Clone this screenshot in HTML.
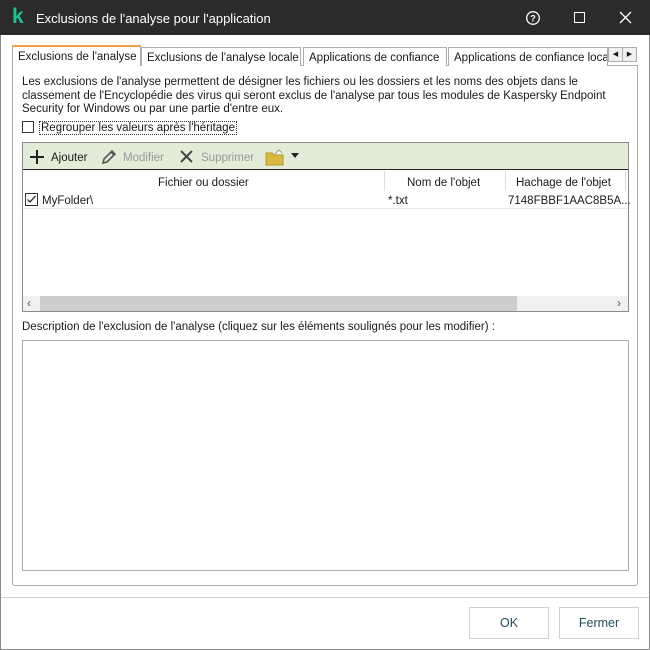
<!DOCTYPE html>
<html><head><meta charset="utf-8"><style>
*{margin:0;padding:0;box-sizing:border-box}
body{width:650px;height:650px;overflow:hidden;background:#fff;font-family:"Liberation Sans",sans-serif;font-size:11.5px;color:#1a1a1a;position:relative}
.abs{position:absolute}
#win{position:absolute;left:0;top:0;width:650px;height:650px;border:1px solid #8a8a8a;border-top:none}
#title{left:0;top:0;width:650px;height:35px;background:#2b2b2b;color:#fff;font-size:13px}
.tab{position:absolute;top:47px;height:19px;border:1px solid #adadad;border-bottom:none;background:#fff;padding:4px 5px 0 5px;white-space:nowrap;overflow:hidden;font-size:11.5px}
#panel{left:12px;top:65px;width:626px;height:521px;border:1px solid #adadad;border-radius:0 0 3px 3px}
.tb{position:absolute;top:152px;font-size:11.5px}
.hd{position:absolute;top:177px;font-size:11.5px}
</style></head><body>
<div id="win"></div>
<div class="abs" id="title">
 <div class="abs" style="left:12px;top:5px;color:#1fc195;font-weight:bold;font-size:21px">k</div>
 <div class="abs" style="left:36px;top:11px">Exclusions de l'analyse pour l'application</div>
 <svg class="abs" style="left:525px;top:10px" width="16" height="16"><circle cx="8" cy="8" r="6.3" fill="none" stroke="#fff" stroke-width="1.3"/><text x="8" y="11.5" fill="#fff" font-size="9" text-anchor="middle" font-family="Liberation Sans" font-weight="bold">?</text></svg>
 <div class="abs" style="left:574px;top:12px;width:11px;height:11px;border:1.3px solid #fff"></div>
 <svg class="abs" style="left:619px;top:11px" width="13" height="13"><path d="M1 1L12 12M12 1L1 12" stroke="#fff" stroke-width="1.3"/></svg>
</div>
<div class="abs" id="panel"></div>
<div class="tab" style="left:12px;top:45px;height:21px;width:129px;border-top:2px solid #f0a040;border-color:#f0a040 #adadad transparent;padding-top:4px">Exclusions de l'analyse</div>
<div class="tab" style="left:141px;width:160px">Exclusions de l'analyse locale</div>
<div class="tab" style="left:303px;width:144px">Applications de confiance</div>
<div class="tab" style="left:448px;width:160px">Applications de confiance locales</div>
<div class="abs" style="left:608px;top:47px;width:15px;height:15px;border:1px solid #adadad;background:#f0f0f0;font-size:7px;text-align:center;line-height:13px">&#9664;</div>
<div class="abs" style="left:622px;top:47px;width:15px;height:15px;border:1px solid #adadad;background:#f0f0f0;font-size:7px;text-align:center;line-height:13px">&#9654;</div>
<div class="abs" style="left:22px;top:76px;width:600px;line-height:13.5px">Les exclusions de l'analyse permettent de désigner les fichiers ou les dossiers et les noms des objets dans le classement de l'Encyclopédie des virus qui seront exclus de l'analyse par tous les modules de Kaspersky Endpoint Security for Windows ou par une partie d'entre eux.</div>
<div class="abs" style="left:22px;top:121px;width:12px;height:12px;border:1px solid #333;background:#fff"></div>
<div class="abs" style="left:39px;top:121px;border:1px dotted #333;padding:0 1px">Regrouper les valeurs après l'héritage</div>
<div class="abs" style="left:22px;top:142px;width:607px;height:170px;border:1px solid #8a8a8a;background:#fff"></div>
<div class="abs" style="left:23px;top:143px;width:605px;height:27px;background:#e3ecd8;border-bottom:1px solid #222"></div>
<svg class="abs" style="left:29px;top:149px" width="16" height="16"><path d="M8 1V15M1 8H15" stroke="#222" stroke-width="2"/></svg>
<div class="tb" style="left:51px">Ajouter</div>
<svg class="abs" style="left:100px;top:148px" width="18" height="18"><path d="M3 15L4 11L12 3L15 6L7 14Z M11 4L14 7" fill="none" stroke="#555" stroke-width="1.6"/></svg>
<div class="tb" style="left:123px;color:#999">Modifier</div>
<svg class="abs" style="left:180px;top:150px" width="13" height="13"><path d="M1 1L12 12M12 1L1 12" stroke="#444" stroke-width="2"/></svg>
<div class="tb" style="left:201px;color:#999">Supprimer</div>
<svg class="abs" style="left:265px;top:149px" width="20" height="17"><path d="M1 4H7L9 6H18V16H1Z" fill="#d8b840" stroke="#b8972a"/><path d="M10 5L14 1L17 4" fill="#fff" stroke="#999"/></svg>
<svg class="abs" style="left:291px;top:153px" width="9" height="6"><path d="M0 0H8L4 5Z" fill="#222"/></svg>
<div class="abs" style="left:384px;top:171px;width:1px;height:20px;background:#ddd"></div>
<div class="abs" style="left:505px;top:171px;width:1px;height:20px;background:#ddd"></div>
<div class="abs" style="left:625px;top:171px;width:1px;height:20px;background:#ddd"></div>
<div class="hd" style="left:158px">Fichier ou dossier</div>
<div class="hd" style="left:407px">Nom de l'objet</div>
<div class="hd" style="left:516px">Hachage de l'objet</div>
<div class="abs" style="left:23px;top:208px;width:605px;height:1px;background:#e8e8e8"></div>
<svg class="abs" style="left:25px;top:193px" width="13" height="13"><rect x="0.5" y="0.5" width="12" height="12" fill="#fff" stroke="#333"/><path d="M2.5 6.5L5 9L10.5 3" fill="none" stroke="#333" stroke-width="1.3"/></svg>
<div class="abs" style="left:42px;top:195px">MyFolder\</div>
<div class="abs" style="left:388px;top:195px">*.txt</div>
<div class="abs" style="left:508px;top:195px">7148FBBF1AAC8B5A...</div>
<div class="abs" style="left:23px;top:296px;width:605px;height:15px;background:#f0f0f0"></div>
<div class="abs" style="left:40px;top:296px;width:477px;height:15px;background:#cdcdcd"></div>
<div class="abs" style="left:27px;top:296px;font-size:12px;color:#555">&#8249;</div>
<div class="abs" style="left:617px;top:296px;font-size:12px;color:#555">&#8250;</div>
<div class="abs" style="left:22px;top:321px">Description de l'exclusion de l'analyse (cliquez sur les éléments soulignés pour les modifier) :</div>
<div class="abs" style="left:22px;top:340px;width:607px;height:231px;border:1px solid #adadad;background:#fff"></div>
<div class="abs" style="left:1px;top:597px;width:648px;height:1px;background:#d0d0d0"></div>
<div class="abs" style="left:469px;top:607px;width:80px;height:32px;border:1px solid #cfcfcf;text-align:center;line-height:31px;font-size:12.5px;color:#1f4f5a">OK</div>
<div class="abs" style="left:559px;top:607px;width:80px;height:32px;border:1px solid #cfcfcf;text-align:center;line-height:31px;font-size:12.5px;color:#1f4f5a">Fermer</div>
</body></html>
